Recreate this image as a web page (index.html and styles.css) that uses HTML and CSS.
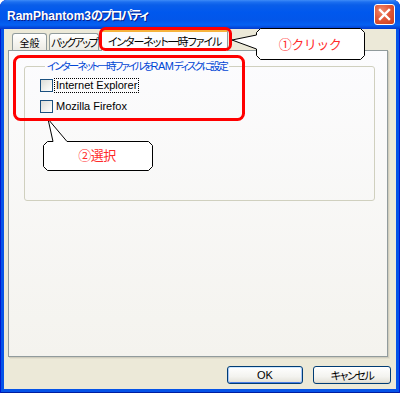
FILE: index.html
```html
<!DOCTYPE html>
<html lang="ja">
<head>
<meta charset="utf-8">
<title>RamPhantom3のプロパティ</title>
<link rel="stylesheet" href="styles.css">
</head>
<body>
<div class="window">
  <div class="titlebar">
    <span class="title">RamPhantom3<span class="jp">のプロパティ</span></span>
    <span class="close"><svg width="13" height="13" viewBox="0 0 13 13"><path d="M2 2 L11 11 M11 2 L2 11" stroke="#fff" stroke-width="2.4" stroke-linecap="square"/></svg></span>
  </div>
  <div class="client">
    <div class="tabs">
      <div class="tab t1">全般</div>
      <div class="tab t2">バックアップ</div>
      <div class="tab active">インターネット一時ファイル</div>
    </div>
    <div class="panel">
      <fieldset class="group">
        <legend class="legend">インターネット一時ファイルを<span class="lat">RAM</span>ディスクに設定</legend>
        <div class="check"><span class="box"></span><span class="lbl focus">Internet Explorer</span></div>
        <div class="check"><span class="box"></span><span class="lbl">Mozilla Firefox</span></div>
      </fieldset>
    </div>
    <div class="buttons">
      <button class="btn ok">OK</button>
      <button class="btn cancel">キャンセル</button>
    </div>
  </div>
  <svg class="overlay" width="400" height="393" viewBox="0 0 400 393">
    <path class="bubble" d="M260.5 28.5 H360.5 L364.5 32.5 V55.5 L360.5 59.5 H260.5 L256.5 55.5 V49 L232 40 L256.5 35 V32.5 Z"/>
    <path class="bubble" d="M47.5 141.5 H53 L48 119 L67 141.5 H148.5 L152.5 145.5 V166.5 L148.5 170.5 H47.5 L43.5 166.5 V145.5 Z"/>
    <rect class="mark" x="100.5" y="28.5" width="130" height="21" rx="5"/>
    <rect class="mark" x="14.5" y="56.5" width="229" height="63" rx="6"/>
    <text class="ctext" x="310" y="49" text-anchor="middle">①クリック</text>
    <text class="ctext" x="97" y="160" text-anchor="middle">②選択</text>
  </svg>
</div>
</body>
</html>
```
FILE: styles.css
```css
html, body {
  margin: 0;
  padding: 0;
  background: #fff;
}
body {
  width: 400px;
  height: 393px;
  overflow: hidden;
}
.window {
  position: relative;
  width: 400px;
  height: 393px;
  display: flex;
  flex-direction: column;
  background: #0553e8;
  box-shadow: inset 1px 0 #0019cf, inset -1px 0 #0019cf, inset 0 -1px #001ea0;
  border-radius: 7px 7px 0 0;
  overflow: hidden;
}
.titlebar {
  height: 29px;
  flex: none;
  display: flex;
  align-items: center;
  padding: 0 5px 0 7px;
  background: linear-gradient(to bottom, #3e8cf7 0px, #1c6ff0 2px, #0a5ee9 5px, #0058ee 12px, #0256ea 20px, #0561f2 25px, #0443d6 28px, #0339cc 29px);
}
.title {
  flex: 1;
  color: #fff;
  font: bold 12px "Liberation Sans", "Noto Sans CJK JP", sans-serif;
  text-shadow: 1px 1px 0 #0a1e8a;
  white-space: nowrap;
}
.title .jp {
  font-family: "Noto Sans CJK JP", sans-serif;
  font-size: 12px;
  font-feature-settings: "palt";
  letter-spacing: -1.8px;
}
.close {
  width: 21px;
  height: 21px;
  box-sizing: border-box;
  border: 1px solid #fff;
  border-radius: 3px;
  background: radial-gradient(circle at 35% 30%, #f08a6c 0%, #e2593a 45%, #c93b1a 100%);
  display: flex;
  align-items: center;
  justify-content: center;
}
.close svg { display: block; }
.client {
  flex: 1;
  margin: 0 4px 4px;
  background: #ece9d8;
  display: flex;
  flex-direction: column;
  font: 11px "Liberation Sans", "Noto Sans CJK JP", sans-serif;
  color: #000;
}
.tabs {
  height: 21px;
  flex: none;
  display: flex;
  align-items: flex-end;
  gap: 2px;
  padding-left: 8px;
}
.tab {
  box-sizing: border-box;
  height: 17px;
  border: 1px solid #919b9c;
  border-bottom: none;
  border-radius: 3px 3px 0 0;
  background: linear-gradient(to bottom, #ffffff, #f4f3ee 60%, #ecebe5);
  display: flex;
  align-items: center;
  justify-content: center;
  font-family: "Noto Sans CJK JP", sans-serif;
  font-size: 11px;
  font-feature-settings: "palt";
  letter-spacing: -1.1px;
  white-space: nowrap;
}
.t1 { width: 35px; font-size: 10px; letter-spacing: 0; }
.t2 { width: 50px; letter-spacing: -2px; }
.tab.active {
  position: relative;
  z-index: 1;
  width: 127px;
  height: 22px;
  margin-bottom: -1px;
  background: #fcfcfe;
  border-top: 3px solid #f6b33c;
  box-shadow: inset 0 -1px 0 #fcfcfe;
  padding-bottom: 2px;
}
.panel {
  box-sizing: border-box;
  margin-left: 4px;
  width: 380px;
  height: 307px;
  border: 1px solid #919b9c;
  background: linear-gradient(to bottom, #fcfcfe, #f4f3ee);
  box-shadow: 1px 1px 0 #d0cdbe, 2px 2px 0 #e2dfce;
  flex: none;
}
.group {
  box-sizing: border-box;
  margin: 8px 0 0 15px;
  width: 351px;
  height: 142px;
  padding: 5px 0 0 15px;
  border: 1px solid #d0d0bf;
  border-radius: 3px;
}
.legend {
  margin-left: 5px;
  padding: 0 2px 0 2px;
  color: #0046d5;
  font-family: "Noto Sans CJK JP", sans-serif;
  font-size: 10.5px;
  font-feature-settings: "palt";
  line-height: 13px;
  letter-spacing: -2px;
  white-space: nowrap;
}
.legend .lat {
  font-family: "Liberation Sans", sans-serif;
  font-size: 11px;
  letter-spacing: -0.5px;
}
.check {
  display: flex;
  align-items: center;
  height: 15px;
  margin-bottom: 6px;
}
.box {
  box-sizing: border-box;
  width: 13px;
  height: 13px;
  border: 1px solid #1c5180;
  background: linear-gradient(135deg, #dcdcd7, #f6f6f3 70%, #ffffff);
  flex: none;
}
.lbl {
  box-sizing: border-box;
  height: 15px;
  line-height: 13px;
  margin-left: 1px;
  padding: 0 1px 0 1px;
  border: 1px solid transparent;
  font-family: "Liberation Sans", sans-serif;
  font-size: 11px;
  white-space: nowrap;
}
.lbl.focus { border: 1px dotted #000; }
.buttons {
  display: flex;
  justify-content: flex-end;
  gap: 10px;
  padding-right: 5px;
  margin-top: 9px;
}
.btn {
  box-sizing: border-box;
  height: 18px;
  padding: 0;
  margin: 0;
  border: 1px solid #003c74;
  border-radius: 3px;
  background: linear-gradient(to bottom, #ffffff, #f3f3ef 60%, #e6e4dc 90%, #d6d0c5);
  font-family: "Liberation Sans", "Noto Sans CJK JP", sans-serif;
  font-size: 11px;
  color: #000;
}
.btn.ok {
  width: 76px;
  box-shadow: inset 0 1px 0 #cee7ff, inset 1px 0 0 #a4c6f7, inset -1px 0 0 #a4c6f7, inset 0 -1px 0 #4a7de6;
}
.btn.cancel {
  width: 78px;
  font-family: "Noto Sans CJK JP", sans-serif;
  font-size: 11px;
  font-feature-settings: "palt";
  letter-spacing: -1.4px;
}
.overlay {
  position: absolute;
  left: 0;
  top: 0;
  pointer-events: none;
  z-index: 5;
}
.bubble {
  fill: #fff;
  stroke: #000;
  stroke-width: 1;
}
.mark {
  fill: none;
  stroke: #ff0000;
  stroke-width: 3;
}
.ctext {
  fill: #ff2a2a;
  font-family: "Noto Sans CJK JP", sans-serif;
  font-size: 13px;
  letter-spacing: -0.5px;
}
```
